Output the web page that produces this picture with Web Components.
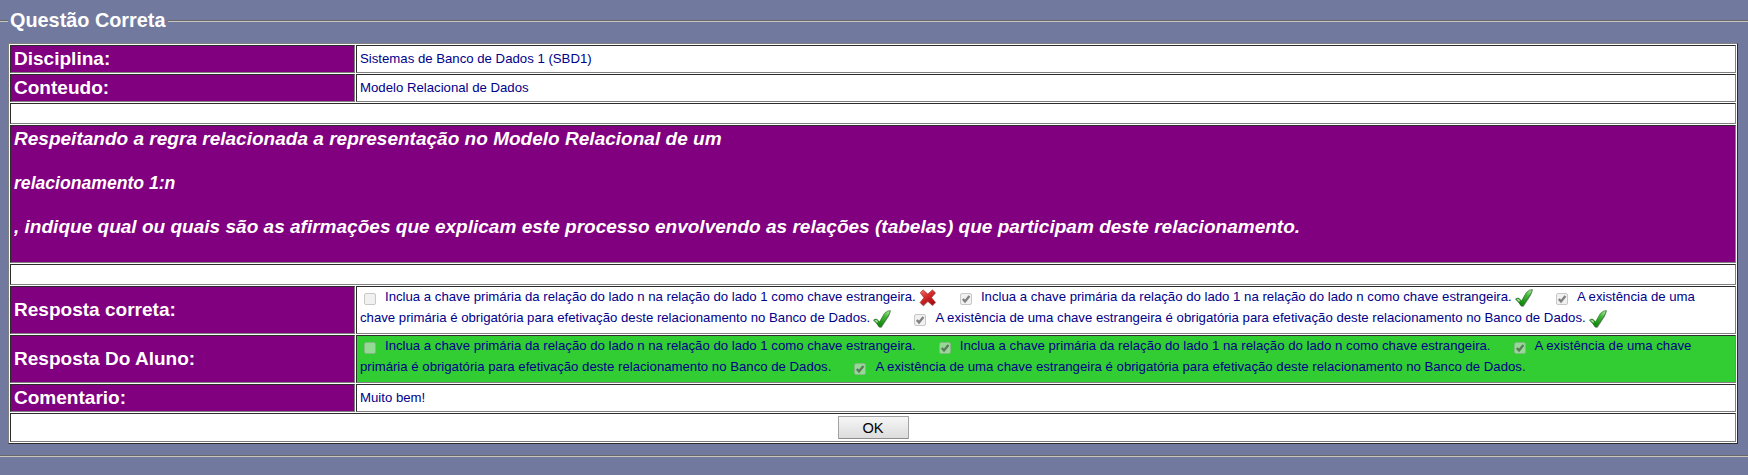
<!DOCTYPE html>
<html lang="pt-BR">
<head>
<meta charset="utf-8">
<title>Questão Correta</title>
<style>
html,body{margin:0;height:475px;overflow:hidden;background:#717a9e}
body{font-family:"Liberation Sans",Arial,sans-serif}
</style>
</head>
<body>
<quiz-fieldset caption="Questão Correta">
  <quiz-table>
    <quiz-row label="Disciplina:" h="28">Sistemas de Banco de Dados 1 (SBD1)</quiz-row>
    <quiz-row label="Conteudo:" h="28">Modelo Relacional de Dados</quiz-row>
    <quiz-band h="21"></quiz-band>
    <quiz-band h="138" kind="question">
      <quiz-question>
        <span>Respeitando a regra relacionada a representação no Modelo Relacional de um</span>
        <span slot="sub">relacionamento 1:n</span>
        <span slot="end">, indique qual ou quais são as afirmações que explicam este processo envolvendo as relações (tabelas) que participam deste relacionamento.</span>
      </quiz-question>
    </quiz-band>
    <quiz-band h="21"></quiz-band>
    <quiz-row label="Resposta correta:" h="48" kind="list"><quiz-check first></quiz-check>Inclua a chave primária da relação do lado n na relação do lado 1 como chave estrangeira. <quiz-mark kind="wrong"></quiz-mark><quiz-check checked></quiz-check>Inclua a chave primária da relação do lado 1 na relação do lado n como chave estrangeira. <quiz-mark></quiz-mark><quiz-check checked></quiz-check>A existência de uma<br>chave primária é obrigatória para efetivação deste relacionamento no Banco de Dados. <quiz-mark></quiz-mark><quiz-check checked></quiz-check>A existência de uma chave estrangeira é obrigatória para efetivação deste relacionamento no Banco de Dados. <quiz-mark></quiz-mark></quiz-row>
    <quiz-row label="Resposta Do Aluno:" h="48" kind="list" green><quiz-check first></quiz-check>Inclua a chave primária da relação do lado n na relação do lado 1 como chave estrangeira.<quiz-check checked></quiz-check>Inclua a chave primária da relação do lado 1 na relação do lado n como chave estrangeira.<quiz-check checked></quiz-check>A existência de uma chave<br>primária é obrigatória para efetivação deste relacionamento no Banco de Dados.<quiz-check checked></quiz-check>A existência de uma chave estrangeira é obrigatória para efetivação deste relacionamento no Banco de Dados.</quiz-row>
    <quiz-row label="Comentario:" h="28">Muito bem!</quiz-row>
    <quiz-band h="29" kind="action"><quiz-button>OK</quiz-button></quiz-band>
  </quiz-table>
</quiz-fieldset>
<script>
const define = (name, render) => customElements.define(name, class extends HTMLElement {
  connectedCallback() {
    if (!this.shadowRoot) this.attachShadow({mode: 'open'}).innerHTML = render(this);
  }
});
const bevel = 'box-sizing:border-box;border:1px solid;border-color:#2c2c2c #808080 #808080 #2c2c2c;';

define('quiz-fieldset', el => `<style>
:host{display:block;padding-top:8px}
.head{display:flex;height:24px;align-items:center}
.line{height:2px;box-sizing:border-box;border-top:1px solid #68676b;border-bottom:1px solid #c8c5bd}
.head .line{margin-top:2px}
.l{width:8px}.r{flex:1}
b{font-size:19.85px;line-height:24px;color:#fff;padding:0 2px;white-space:nowrap;width:156px}
.body{padding:11px 10px 11px 8px}
</style>
<div class="head"><div class="line l"></div><b>${el.getAttribute('caption')}</b><div class="line r"></div></div>
<div class="body"><slot></slot></div><div class="line"></div>`);

define('quiz-table', () => `<style>
:host{display:flex;flex-direction:column;gap:1px;padding:1px;background:#fff;border:1px solid;border-color:#808080 #2c2c2c #2c2c2c #808080}
</style><slot></slot>`);

define('quiz-row', el => {
  const list = el.getAttribute('kind') === 'list';
  return `<style>
:host{display:grid;grid-template-columns:345px 1fr;gap:1px;height:${el.getAttribute('h')}px}
div{${bevel}padding:0 3px;display:flex;align-items:center;min-width:0}
.k{background:#800080;color:#fff;font-size:19.05px;font-weight:bold}
.v{background:${el.hasAttribute('green') ? '#32cd32' : '#fff'};color:#00008b;font-size:13.2px;white-space:nowrap;padding-bottom:2px}
${list ? '.v{align-items:flex-start}p{margin:-1px 0 0;line-height:21px}' : 'p{margin:0}'}
</style><div class="k">${el.getAttribute('label')}</div><div class="v"><p><slot></slot></p></div>`;
});

define('quiz-band', el => {
  const kind = el.getAttribute('kind');
  return `<style>
:host{display:block;height:${el.getAttribute('h')}px;${bevel}background:${kind === 'question' ? '#800080' : '#fff'}}
${kind === 'action' ? ':host{display:flex;justify-content:center;align-items:flex-start;padding-top:2px}' : ''}
</style><slot></slot>`;
});

define('quiz-question', () => `<style>
:host{display:block;padding:2px 3px;color:#fff;font:italic bold 19.05px/22px "Liberation Sans",Arial,sans-serif;white-space:nowrap}
div{height:22px;margin-bottom:22px}
.s{font-size:17.6px}
</style><div><slot></slot></div><div class="s"><slot name="sub"></slot></div><div><slot name="end"></slot></div>`);

define('quiz-check', el => `<style>
:host{display:inline-block;width:12px;height:12px;margin:0 9px 0 ${el.hasAttribute('first') ? 4 : 23}px;vertical-align:-4px;line-height:0}
svg{display:block}
</style><svg width="12" height="12" viewBox="0 0 12 12"><rect x=".5" y=".5" width="11" height="11" rx="1.5" fill="#e6e6e6" fill-opacity=".55" stroke="#a0a0a0" stroke-opacity=".55"/>
${el.hasAttribute('checked') ? '<path d="M2.8 6 5 8.4 9.4 3" fill="none" stroke="#444" stroke-opacity=".65" stroke-width="2.3"/>' : ''}</svg>`);

define('quiz-mark', el => `<style>
:host{display:inline-block;width:17.5px;height:18px;vertical-align:-6px;line-height:0}
svg{display:block;margin-left:-.5px}
</style><svg width="18" height="18" viewBox="0 0 18 18"><defs>
<linearGradient id="g" x1="1" y1="0" x2=".3" y2="1"><stop offset="0" stop-color="#b4efa9"/><stop offset=".4" stop-color="#3fb635"/><stop offset="1" stop-color="#078006"/></linearGradient>
<linearGradient id="r" x1="0" y1="0" x2=".6" y2="1"><stop offset="0" stop-color="#f0746f"/><stop offset=".5" stop-color="#d52a2a"/><stop offset="1" stop-color="#a80b10"/></linearGradient></defs>
${el.getAttribute('kind') === 'wrong'
  ? '<path d="M2 4.2 4.5 1.2 9.1 5.4 13.5 1.2 16.8 4.3 12.8 9 17 13.7 13.8 17.2 9.2 13 4.6 17.4 1.4 14.2 5.4 9.4Z" fill="#777" opacity=".55"/><path d="M1.2 3.7 4.1.9 8.8 5.1 13.4.9 16.4 3.8 12.3 8.6 16.4 13.3 13.4 16.3 8.7 12.2 4.1 16.5 1.1 13.5 5 8.7Z" fill="url(#r)" stroke="#9e3132" stroke-width=".7"/>'
  : '<path d="M1.2 10.8 3.9 10 7 12.2 12.4 3.4 17.8 1 15.9 6.4 8.6 17.8 6.5 17.6Z" fill="#555" opacity=".65"/><path d="M.5 10.2Q2.2 8.6 4 9.3L6.5 12 11.4 3.4Q14.3.6 17.3.5 17 3.3 15.1 6L7.9 17 6.1 16.9Q4 12.7 .5 10.2Z" fill="url(#g)" stroke="#2b7427" stroke-width=".7"/><path d="M1.3 10.1Q3.4 9 4.4 10.7L5.4 12.5 3.5 12.4Z" fill="#bce9b4" opacity=".85"/>'}</svg>`);

define('quiz-button', () => `<style>
:host{display:block;box-sizing:border-box;width:71px;height:23px;border:1px solid #a2a2a2;border-bottom-color:#8c8c8c;border-radius:1px;background:linear-gradient(#f6f6f6,#dcdcdc);color:#000;font-size:14.6px;line-height:22px;text-align:center}
</style><slot></slot>`);
</script>
</body>
</html>
